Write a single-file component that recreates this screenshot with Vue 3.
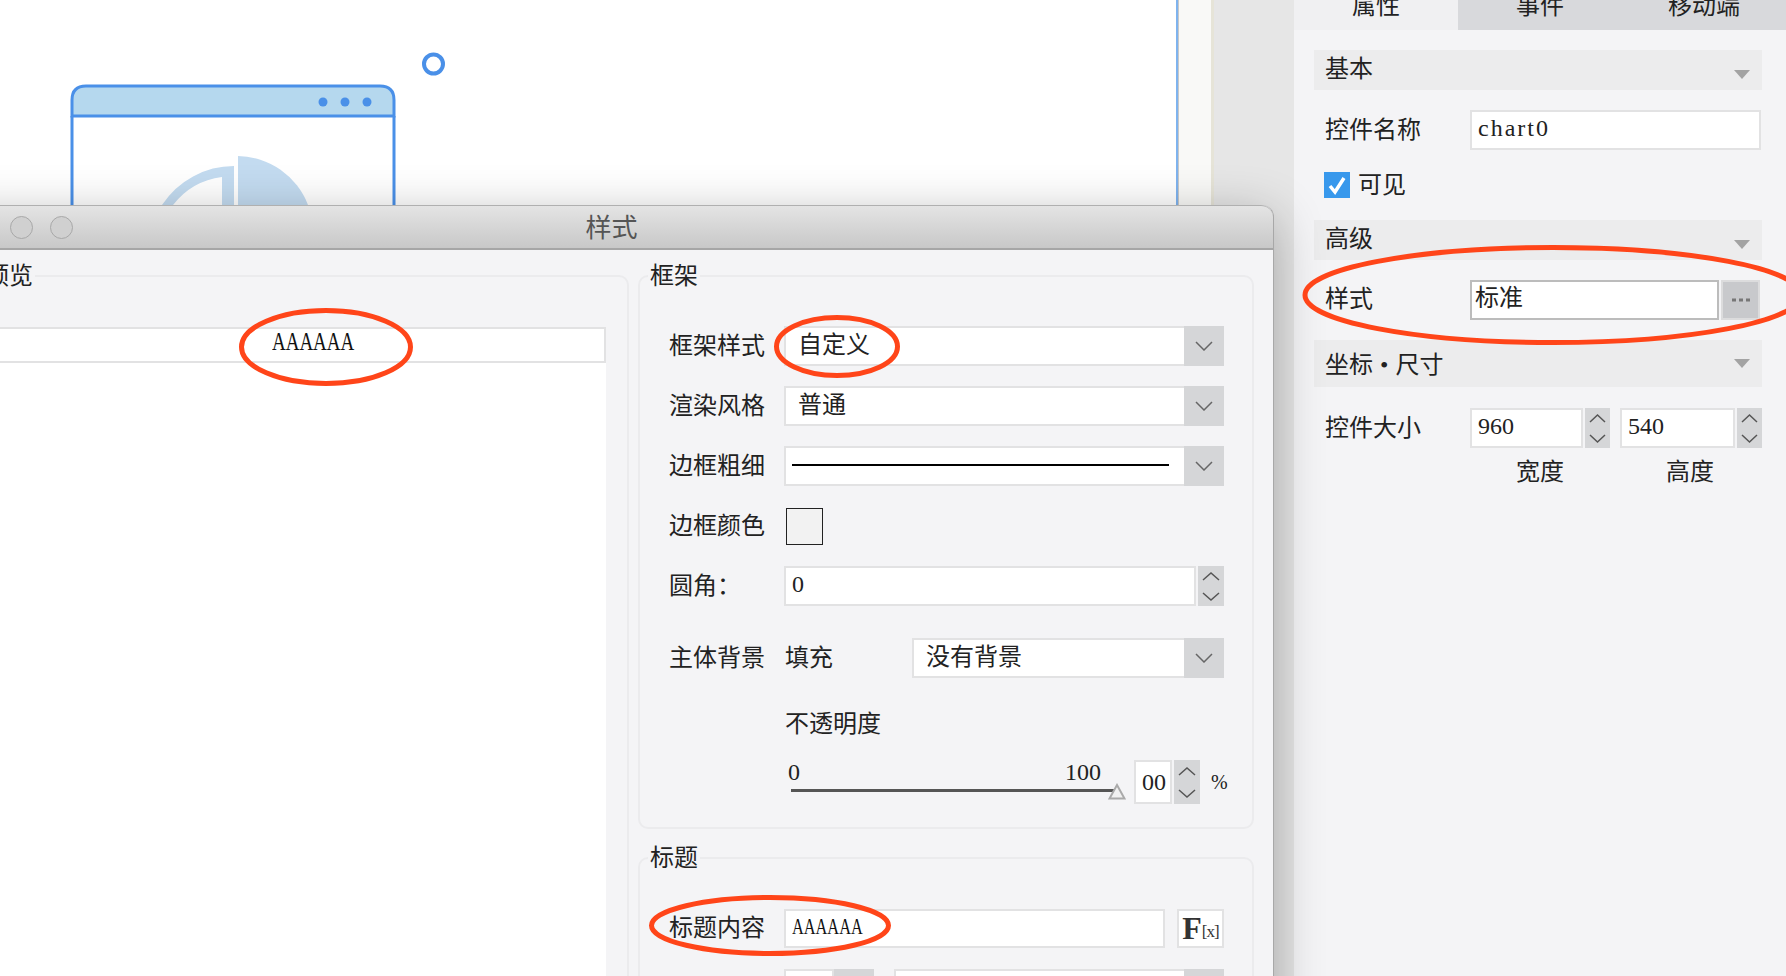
<template>
  <div class="screen">
    <!-- editor canvas behind the dialog -->
    <div class="workspace">
      <div class="canvas">
        <svg class="widget" width="1176" height="210" viewBox="0 0 1176 210">
          <circle cx="433.500" cy="64" r="9.500" fill="none" stroke="#4a90e8" stroke-width="4" />
          <path d="M72 210V100q0-14 14-14H380q14 0 14 14V210Z" fill="#fff" />
          <path d="M72 116V100q0-14 14-14H380q14 0 14 14V116Z" fill="#b5d8ee" stroke="#4a90e8" stroke-width="3" />
          <path d="M72 116V210M394 116V210" stroke="#4a90e8" stroke-width="3" fill="none" />
          <circle cx="323" cy="102" r="4.500" fill="#4a90e8" />
          <circle cx="345" cy="102" r="4.500" fill="#4a90e8" />
          <circle cx="367" cy="102" r="4.500" fill="#4a90e8" />
          <path d="M238 156A76 76 0 0 1 308 205V210H238Z" fill="#c3dbf0" />
          <path d="M234 166A86 86 0 0 0 162 205L160 210H171L173 205A74 74 0 0 1 222 177V210H234Z" fill="#c3dbf0" />
        </svg>
      </div>
      <div class="ruler"></div>
    </div>

    <!-- properties panel -->
    <aside class="panel">
      <div class="tabs">
        <div class="tab active">属性</div>
        <div class="tab">事件</div>
        <div class="tab">移动端</div>
      </div>

      <div class="bar"><span class="bar-text">基本</span>
        <svg class="bar-arrow" width="16" height="9"><path d="M0 0H16L8 9Z" fill="#a3a3a3" /></svg>
      </div>
      <div class="prop-row">
        <span class="prop-label">控件名称</span>
        <div class="input grow chart-name">chart0</div>
      </div>
      <label class="check-row">
        <span class="check">
          <svg width="26" height="26"><path d="M6 14l5 6 9-14" fill="none" stroke="#fff" stroke-width="3.500" /></svg>
        </span>
        可见
      </label>
      <div class="bar after-check"><span class="bar-text">高级</span>
        <svg class="bar-arrow" width="16" height="9"><path d="M0 0H16L8 9Z" fill="#a3a3a3" /></svg>
      </div>
      <div class="prop-row">
        <span class="prop-label style-label">样式</span>
        <div class="input grow style-input">标准</div>
        <div class="more-btn">
          <svg width="22" height="6"><path d="M2 3H6M9 3H13M16 3H20" stroke="#777" stroke-width="3" /></svg>
        </div>
      </div>
      <div class="bar tall"><span class="tall-text">坐标 • 尺寸</span>
        <svg width="16" height="9"><path d="M0 0H16L8 9Z" fill="#a3a3a3" /></svg>
      </div>
      <div class="prop-row size-row">
        <span class="prop-label">控件大小</span>
        <div class="input size-w">960</div>
        <div class="spin">
          <svg width="25" height="40"><path d="M5 14l7.500-7 7.500 7M5 27l7.500 7 7.500-7" fill="none" stroke="#555" stroke-width="1.500" /></svg>
        </div>
        <div class="input size-h">540</div>
        <div class="spin">
          <svg width="25" height="40"><path d="M5 14l7.500-7 7.500 7M5 27l7.500 7 7.500-7" fill="none" stroke="#555" stroke-width="1.500" /></svg>
        </div>
      </div>
      <div class="size-captions">
        <span>宽度</span>
        <span>高度</span>
      </div>
    </aside>

    <!-- style dialog -->
    <section class="dialog">
      <header class="titlebar">
        <div class="lights"><i></i><i></i><i></i></div>
        <span>样式</span>
      </header>
      <div class="dialog-body">
        <fieldset class="group preview">
          <legend>预览</legend>
          <div class="preview-box">
            <div class="preview-title"><span class="narrow">AAAAAA</span></div>
          </div>
        </fieldset>

        <div class="settings">
          <fieldset class="group frame">
            <legend>框架</legend>
            <div class="row">
              <span class="label">框架样式</span>
              <div class="select grow">
                <div class="select-value">自定义</div>
                <div class="select-arrow"><svg width="18" height="10"><path d="M1 1l8 8 8-8" fill="none" stroke="#666" stroke-width="1.500" /></svg></div>
              </div>
            </div>
            <div class="row">
              <span class="label">渲染风格</span>
              <div class="select grow">
                <div class="select-value">普通</div>
                <div class="select-arrow"><svg width="18" height="10"><path d="M1 1l8 8 8-8" fill="none" stroke="#666" stroke-width="1.500" /></svg></div>
              </div>
            </div>
            <div class="row">
              <span class="label">边框粗细</span>
              <div class="select grow">
                <div class="select-value line-value"><div class="line"></div></div>
                <div class="select-arrow"><svg width="18" height="10"><path d="M1 1l8 8 8-8" fill="none" stroke="#666" stroke-width="1.500" /></svg></div>
              </div>
            </div>
            <div class="row">
              <span class="label">边框颜色</span>
              <div class="swatch"></div>
            </div>
            <div class="row">
              <span class="label">圆角：</span>
              <div class="input grow">0</div>
              <div class="spin radius-spin">
                <svg width="26" height="40"><path d="M5 14l8-7 8 7M5 27l8 7 8-7" fill="none" stroke="#555" stroke-width="1.500" /></svg>
              </div>
            </div>
            <div class="row bg-row">
              <span class="label">主体背景</span>
              <span class="fill-label">填充</span>
              <div class="select grow">
                <div class="select-value">没有背景</div>
                <div class="select-arrow"><svg width="18" height="10"><path d="M1 1l8 8 8-8" fill="none" stroke="#666" stroke-width="1.500" /></svg></div>
              </div>
            </div>
            <div class="opacity-label">不透明度</div>
            <div class="opacity-row">
              <div class="slider">
                <div class="scale"><span>0</span><span>100</span></div>
                <div class="track"></div>
                <svg class="thumb" width="18" height="17"><path d="M9 2L16.500 15.500H1.500Z" fill="#f1f1f1" stroke="#aaa" stroke-width="2" /></svg>
              </div>
              <div class="input percent">00</div>
              <div class="spin percent-spin">
                <svg width="26" height="44"><path d="M5 15l8-7 8 7M5 30l8 7 8-7" fill="none" stroke="#555" stroke-width="1.500" /></svg>
              </div>
              <span class="percent-sign">%</span>
            </div>
          </fieldset>

          <fieldset class="group title-group">
            <legend>标题</legend>
            <div class="row title-row">
              <span class="label">标题内容</span>
              <div class="input grow"><span class="narrow small">AAAAAA</span></div>
              <div class="fx"><b>F</b><small>[x]</small></div>
            </div>
            <div class="row font-row">
              <div class="input font-size"></div>
              <div class="spin font-spin"></div>
              <div class="select grow">
                <div class="select-value"></div>
                <div class="select-arrow"></div>
              </div>
            </div>
          </fieldset>
        </div>
      </div>
    </section>

    <!-- red marks drawn on the screenshot -->
    <svg class="marks" width="1786" height="976" viewBox="0 0 1786 976">
      <ellipse cx="326" cy="347" rx="84.500" ry="36.500" />
      <ellipse cx="837" cy="346.500" rx="60.500" ry="29" />
      <ellipse cx="770" cy="925.500" rx="118.500" ry="28" />
      <ellipse cx="1553" cy="295" rx="248" ry="47.500" />
    </svg>
  </div>
</template>

<script setup>
</script>

<style>
html, body {
  margin: 0;
  padding: 0;
  background: #fff;
}
</style>

<style scoped>
.screen {
  position: relative;
  display: flex;
  width: 1786px;
  height: 976px;
  overflow: hidden;
  font-family: "Liberation Serif", "Noto Sans CJK SC", serif;
  font-size: 24px;
  line-height: 24px;
  color: #222;
}

/* workspace */
.workspace {
  display: flex;
  flex: 0 0 1294px;
  background: #e6e6e6;
}

.canvas {
  position: relative;
  flex: 0 0 1176px;
  background: #fff;
  border-right: 2px solid #7fb3ee;
}

.widget {
  position: absolute;
  left: 0;
  top: 0;
}

.ruler {
  flex: 0 0 32px;
  background: #f9f9f7;
  border-left: 1px solid #c8c8c8;
  border-right: 3px solid #e6e4d8;
}

/* right panel */
.panel {
  flex: 1;
  min-width: 0;
  padding-right: 24px;
  background: #f4f4f6;
}

.tabs {
  display: flex;
  height: 30px;
  margin-right: -24px;
  background: #d8d9dc;
}

.tab {
  display: flex;
  flex: 0 0 164px;
  align-items: flex-end;
  justify-content: center;
  padding-bottom: 12px;
  box-sizing: border-box;
}

.tab.active {
  background: #f0f0f2;
}

.bar {
  display: flex;
  align-items: center;
  justify-content: space-between;
  box-sizing: border-box;
  height: 40px;
  margin: 20px 0 0 20px;
  padding: 0 12px 0 11px;
  background: #ececed;
}

.bar-text {
  margin-bottom: 3px;
}

.bar-arrow {
  margin-top: 9px;
}

.bar.after-check {
  margin-top: 22px;
}

.bar.tall {
  height: 47px;
}

.tall-text {
  margin-top: 3px;
  word-spacing: 1px;
}

.prop-row {
  display: flex;
  align-items: center;
  height: 40px;
  margin: 20px 0 0 31px;
}

.prop-label {
  flex: 0 0 145px;
}

.style-label {
  margin-bottom: 2px;
}

.check-row {
  display: flex;
  align-items: center;
  gap: 8px;
  height: 26px;
  margin: 22px 0 0 30px;
}

.check {
  width: 26px;
  height: 26px;
  background: #3898ec;
}

.check svg {
  display: block;
}

.input {
  box-sizing: border-box;
  height: 40px;
  padding: 0 6px 4px;
  display: flex;
  align-items: center;
  background: #fff;
  border: 2px solid #e2e2e3;
}

.grow {
  flex: 1;
  min-width: 0;
}

.chart-name {
  letter-spacing: 2px;
  margin-right: 1px;
}

.style-input {
  padding: 0 3px 4px;
  border-color: #bcbcbc;
}

.more-btn {
  display: flex;
  align-items: center;
  justify-content: center;
  flex: 0 0 39px;
  box-sizing: border-box;
  height: 40px;
  margin: 0 2px 0 2px;
  background: #c8c9cc;
  border: 2px solid #dcdcdd;
}

.size-row {
  margin-top: 21px;
}

.size-w {
  flex: 0 0 113px;
}

.size-h {
  flex: 0 0 115px;
  margin-left: 10px;
}

.spin {
  flex: 0 0 25px;
  height: 40px;
  margin-left: 2px;
  background: #d5d6d8;
}

.spin svg {
  display: block;
}

.size-captions {
  display: flex;
  margin: 12px 0 0 222px;
}

.size-captions span {
  flex: 0 0 150px;
}

/* dialog */
.dialog {
  position: absolute;
  left: -50px;
  top: 205px;
  box-sizing: border-box;
  width: 1324px;
  height: 820px;
  border-right: 1px solid #a8a8a8;
  border-radius: 12px 12px 0 0;
  background: #f4f4f6;
  box-shadow: 0 12px 50px rgba(0, 0, 0, 0.3);
}

.titlebar {
  position: relative;
  display: flex;
  align-items: center;
  justify-content: center;
  box-sizing: border-box;
  height: 45px;
  padding-top: 3px;
  border-top: 1px solid #b0b0b0;
  border-bottom: 2px solid #a6a6a6;
  border-radius: 12px 12px 0 0;
  background: linear-gradient(#e4e4e4, #c8c8c8);
  color: #555;
  font-size: 26px;
}

.lights {
  position: absolute;
  left: 20px;
  top: 10px;
  display: flex;
  gap: 17px;
}

.lights i {
  box-sizing: border-box;
  width: 23px;
  height: 23px;
  border: 1px solid #a8a8a8;
  border-radius: 50%;
  background: #d0d0d0;
}

.dialog-body {
  display: flex;
  gap: 9px;
  padding: 14px 19px 0 20px;
}

.group {
  margin: 0;
  padding: 0;
  min-width: 0;
  border: 2px solid #ebebed;
  border-radius: 10px;
}

.group legend {
  margin-left: -21px;
  padding: 0 2px;
}

.preview {
  box-sizing: border-box;
  flex: 0 0 659px;
  height: 900px;
}

.group.preview legend {
  margin-left: 11px;
}

.preview-box {
  height: 800px;
  margin: 39px 21px 0 0;
  background: #fff;
}

.preview-title {
  box-sizing: border-box;
  height: 36px;
  padding-left: 300px;
  background: #fff;
  border: 2px solid #e2e2e3;
  border-left: 0;
  line-height: 26px;
  font-size: 26px;
}

.narrow {
  display: inline-block;
  transform: scaleX(0.73);
  transform-origin: left center;
  color: #111;
}

.narrow.small {
  font-size: 24px;
  transform: scaleX(0.68);
}

.settings {
  flex: 1;
  min-width: 0;
}

.frame {
  box-sizing: border-box;
  height: 565px;
  padding: 38px 28px 0 29px;
}

.title-group {
  box-sizing: border-box;
  height: 300px;
  margin-top: 17px;
  padding: 38px 28px 0 29px;
}

.row {
  display: flex;
  align-items: center;
  height: 40px;
  margin-bottom: 20px;
}

.label {
  flex: 0 0 115px;
}

.select {
  display: flex;
  height: 40px;
}

.select-value {
  flex: 1;
  display: flex;
  align-items: center;
  box-sizing: border-box;
  min-width: 0;
  padding: 0 0 2px 12px;
  background: #fff;
  border: 2px solid #e2e2e3;
  border-right: 0;
}

.line-value {
  padding-left: 6px;
  padding-right: 15px;
}

.line {
  flex: 1;
  height: 2px;
  background: #000;
}

.select-arrow {
  display: flex;
  align-items: center;
  justify-content: center;
  flex: 0 0 40px;
  background: #d5d6d8;
}

.swatch {
  box-sizing: border-box;
  width: 37px;
  height: 37px;
  margin-left: 2px;
  background: #f2f2f2;
  border: 1px solid #222;
}

.radius-spin {
  flex: 0 0 26px;
}

.bg-row {
  margin: 32px 0 0;
}

.fill-label {
  flex: 0 0 127px;
  padding-left: 1px;
}

.opacity-label {
  margin: 34px 0 24px 116px;
}

.opacity-row {
  display: flex;
  height: 44px;
  margin-left: 119px;
}

.slider {
  position: relative;
  flex: 0 0 338px;
}

.scale {
  display: flex;
  justify-content: space-between;
  padding-right: 25px;
}

.track {
  width: 323px;
  height: 3px;
  margin: 5px 0 0 3px;
  background: #555;
}

.thumb {
  position: absolute;
  right: 0;
  top: 23px;
}

.percent {
  flex: 0 0 38px;
  height: 44px;
  margin-left: 8px;
  padding: 0 0 0 2px;
  justify-content: center;
}

.percent-spin {
  flex: 0 0 26px;
  height: 44px;
}

.percent-sign {
  margin: 10px 0 0 11px;
  font-size: 20px;
}

.title-row .input {
  height: 39px;
}

.fx {
  display: flex;
  align-items: flex-end;
  justify-content: center;
  box-sizing: border-box;
  flex: 0 0 47px;
  height: 39px;
  margin-left: 12px;
  padding-bottom: 6px;
  background: #fff;
  border: 2px solid #e2e2e3;
  color: #333;
}

.fx b {
  font-size: 32px;
  line-height: 24px;
}

.fx small {
  font-size: 17px;
  line-height: 17px;
  letter-spacing: -1px;
}

.font-row {
  margin: 21px 0 0 115px;
  align-items: flex-start;
}

.font-size {
  flex: 0 0 50px;
}

.font-spin {
  flex: 0 0 40px;
  margin: 0 20px 0 0;
}

/* annotations on top of everything */
.marks {
  position: absolute;
  left: 0;
  top: 0;
  pointer-events: none;
}

.marks ellipse {
  fill: none;
  stroke: #ff4519;
  stroke-width: 5;
}
</style>
